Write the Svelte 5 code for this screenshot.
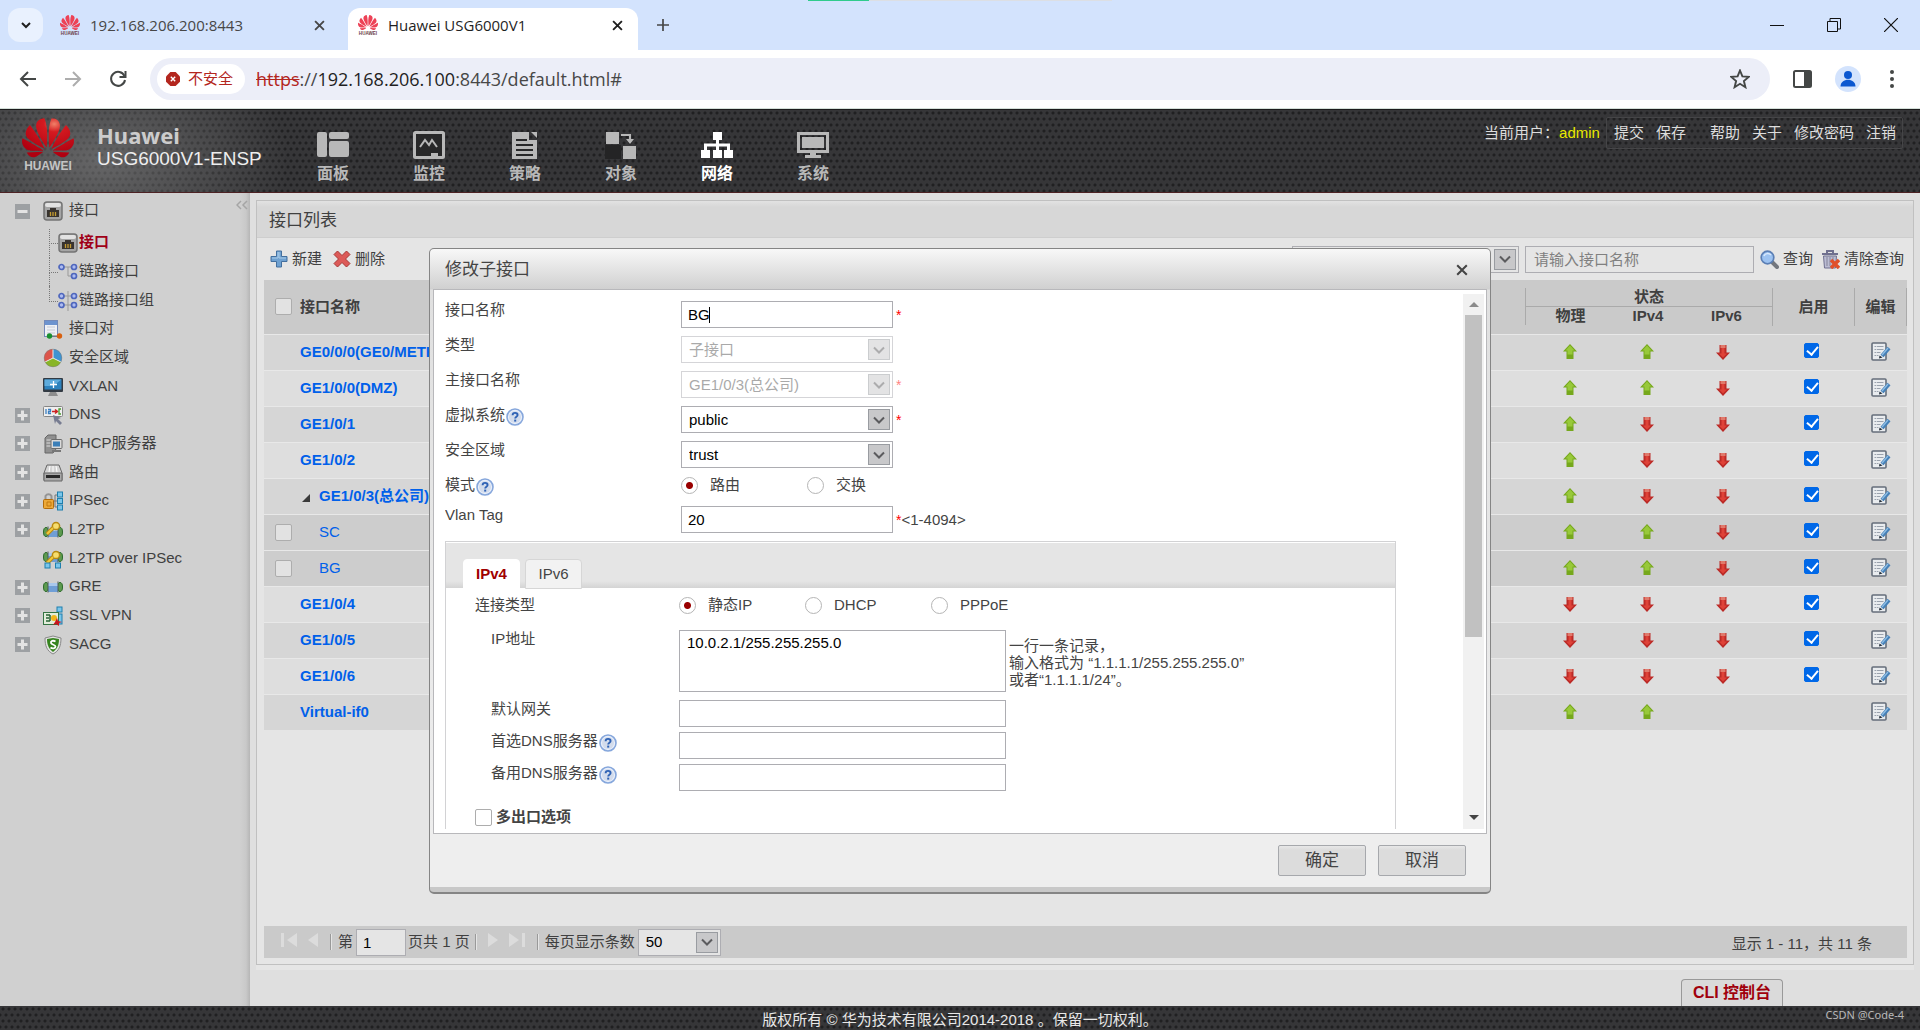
<script>
    let mode = 'route'
    let linkType = 'static'
    let ifName = 'BG'
    let vlanTag = '20'
    let ipList = '10.0.2.1/255.255.255.0'
    let page = '1'

    const nav = [
        { icon: 'panel', text: '面板' },
        { icon: 'monitor', text: '监控' },
        { icon: 'policy', text: '策略' },
        { icon: 'object', text: '对象' },
        { icon: 'network', text: '网络', active: true },
        { icon: 'system', text: '系统' }
    ]

    const tree = [
        { icon: 'port', text: '接口', toggle: 'minus' },
        { icon: 'port', text: '接口', child: true, active: true },
        { icon: 'link', text: '链路接口', child: true },
        { icon: 'linkGroup', text: '链路接口组', child: true, last: true },
        { icon: 'pair', text: '接口对' },
        { icon: 'zone', text: '安全区域' },
        { icon: 'vxlan', text: 'VXLAN' },
        { icon: 'dns', text: 'DNS', toggle: 'plus' },
        { icon: 'dhcp', text: 'DHCP服务器', toggle: 'plus' },
        { icon: 'route', text: '路由', toggle: 'plus' },
        { icon: 'ipsec', text: 'IPSec', toggle: 'plus' },
        { icon: 'l2tp', text: 'L2TP', toggle: 'plus' },
        { icon: 'l2tpIpsec', text: 'L2TP over IPSec' },
        { icon: 'gre', text: 'GRE', toggle: 'plus' },
        { icon: 'ssl', text: 'SSL VPN', toggle: 'plus' },
        { icon: 'sacg', text: 'SACG', toggle: 'plus' }
    ]

    // status: physical, IPv4, IPv6
    const rows = [
        { name: 'GE0/0/0(GE0/METH)', status: ['up', 'up', 'down'], enabled: true },
        { name: 'GE1/0/0(DMZ)', status: ['up', 'up', 'down'], enabled: true },
        { name: 'GE1/0/1', status: ['up', 'down', 'down'], enabled: true },
        { name: 'GE1/0/2', status: ['up', 'down', 'down'], enabled: true },
        { name: 'GE1/0/3(总公司)', status: ['up', 'down', 'down'], enabled: true, open: true },
        { name: 'SC', status: ['up', 'up', 'down'], enabled: true, sub: true },
        { name: 'BG', status: ['up', 'up', 'down'], enabled: true, sub: true },
        { name: 'GE1/0/4', status: ['down', 'down', 'down'], enabled: true },
        { name: 'GE1/0/5', status: ['down', 'down', 'down'], enabled: true },
        { name: 'GE1/0/6', status: ['down', 'down', 'down'], enabled: true },
        { name: 'Virtual-if0', status: ['up', 'up', ''] }
    ]
</script>

{#snippet logo(size, color, textColor)}
    <svg width={size} viewBox="0 0 24 25" aria-hidden="true">
        <defs><radialGradient id="petal" cx=".62" cy=".15" r=".8"><stop offset="0" stop-color="#f08068" /><stop offset=".25" stop-color="#d41a20" /><stop offset="1" stop-color="#b00010" /></radialGradient></defs>
        <path transform="translate(0 -2.9)" fill={color} d="M3.67 6.14S1.82 7.91 1.72 9.78v.35c.08 1.51 1.22 2.4 1.22 2.4 1.83 1.79 6.26 4.04 7.3 4.55 0 0 .06.03.1-.01l.02-.04v-.04C7.52 10.8 3.67 6.14 3.67 6.14zM9.65 18.6c-.02-.08-.1-.08-.1-.08l-7.38.26c.8 1.43 2.15 2.53 3.56 2.2.96-.25 3.16-1.78 3.88-2.3.06-.05.04-.09.04-.09zm.08-.78C6.49 15.63.21 12.28.21 12.28c-.15.46-.2.9-.21 1.3v.07c0 1.07.4 1.82.4 1.82.8 1.69 2.34 2.2 2.34 2.2.7.3 1.4.31 1.4.31.12.02 4.4 0 5.54 0 .05 0 .08-.05.08-.05v-.06c0-.03-.03-.05-.03-.05zM9.06 3.19a3.42 3.42 0 00-2.57 3.15v.41c.03.6.16 1.05.16 1.05.66 2.9 3.86 7.65 4.55 8.65.05.05.1.03.1.03a.1.1 0 00.06-.1c1.06-10.6-1.11-13.42-1.11-13.42-.32.02-1.19.23-1.19.23zm8.299 2.27s-.49-1.8-2.44-2.28c0 0-.57-.14-1.17-.22 0 0-2.18 2.81-1.12 13.43.01.07.06.08.06.08.07.03.1-.03.1-.03.72-1.03 3.9-5.76 4.55-8.64 0 0 .36-1.4.02-2.34zm-2.92 13.07s-.07 0-.09.05c0 0-.01.07.03.1.7.51 2.85 2 3.88 2.3 0 0 .16.05.43.06h.14c.69-.02 1.9-.37 3-2.26l-7.4-.25zm7.83-8.41c.14-2.06-1.94-3.97-1.94-3.98 0 0-3.85 4.66-6.67 10.8 0 0-.03.08.02.13l.04.01h.06c1.06-.53 5.46-2.77 7.28-4.54 0 0 1.15-.93 1.21-2.42zm1.52 2.14s-6.28 3.37-9.52 5.55c0 0-.05.04-.03.11 0 0 .03.06.07.06 1.16 0 5.56 0 5.67-.02 0 0 .57-.02 1.27-.29 0 0 1.56-.5 2.37-2.27 0 0 .73-1.45.17-3.14z" />
        <text x="12" y="23.800" text-anchor="middle" font-size="5.500" font-weight="bold" font-family="Liberation Sans, sans-serif" fill={textColor}>HUAWEI</text>
    </svg>
{/snippet}

{#snippet close(size)}
    <svg width={size} height={size} viewBox="0 0 10 10" aria-hidden="true"><path d="M1 1l8 8M9 1l-8 8" stroke="currentColor" stroke-width="1.7" /></svg>
{/snippet}

{#snippet help()}
    <svg class="help" width="18" height="18" viewBox="0 0 18 18" aria-hidden="true">
        <circle cx="9" cy="9" r="8" fill="#e9effa" stroke="#86a7dc" stroke-width="1.6" />
        <circle cx="9" cy="9" r="6" fill="#d3dcec" />
        <path d="M6.6 7.2c0-3.1 5-3.1 5-.2 0 1.7-2.4 1.7-2.4 3.4" fill="none" stroke="#2e62b5" stroke-width="1.9" />
        <rect x="8.2" y="11.6" width="2" height="2" fill="#2e62b5" />
    </svg>
{/snippet}

{#snippet arrow(dir)}
    <svg width="14" height="16" viewBox="0 0 14 16" role="img" aria-label={dir}>
        {#if dir == 'up'}
            <path d="M7 0l7 7.5h-3.5V15h-7V7.500H0z" fill="#76a81c" />
            <path d="M7 1.500l4.500 5H9.500v4h-5v-4h-2z" fill="#98c93a" />
        {:else}
            <path d="M3.500 1h7v7.500H14L7 16 0 8.500h3.500z" fill="#bb2a26" />
            <path d="M4.500 1h5v3h-5z" fill="#e07a6c" />
            <path d="M5.500 4h3v5.500h2.500L7 13.500 3 9.500h2.500z" fill="#df4238" />
        {/if}
    </svg>
{/snippet}

{#snippet chevron()}
    <span class="drop"><svg width="12" height="8" viewBox="0 0 12 8" aria-hidden="true"><path d="M1 1.500l5 5 5-5" fill="none" stroke="#5b5b5e" stroke-width="2" /></svg></span>
{/snippet}

{#snippet navIcon(name)}
    <svg width="32" height="28" viewBox="0 0 32 28" fill="currentColor" aria-hidden="true">
        {#if name == 'panel'}
            <rect x="0" y="1" width="10" height="25" rx="2" /><rect x="12" y="1" width="20" height="7" rx="2" /><rect x="12" y="10" width="20" height="16" rx="2" />
        {:else if name == 'monitor'}
            <rect x="1.500" y="1.500" width="29" height="25" rx="1" fill="#282829" stroke="currentColor" stroke-width="3" />
            <path d="M7 16l5-7 4 5 3-5 5 7" fill="none" stroke="currentColor" stroke-width="2" /><path d="M18 22h7v3h-7z" />
        {:else if name == 'policy'}
            <path d="M3 1h17v8h8v19H3z" /><path d="M22 1h6v6z" />
            <path d="M7 9h11M7 14h17M7 19h17M7 24h17" stroke="#282829" stroke-width="2" />
        {:else if name == 'object'}
            <rect x="0" y="14" width="16" height="14" fill="#242425" />
            <rect x="1" y="1" width="13" height="12" /><rect x="18" y="15" width="13" height="13" />
            <path d="M16 3h10v5h3l-4 5-4-5h3V5h-8z" />
        {:else if name == 'network'}
            <path d="M12 1h9v8h-9zM0 19h9v8H0zM12 19h9v8h-9zM23 19h9v8h-9z" />
            <path d="M16.500 8v11M4.500 20v-6h23v6" fill="none" stroke="currentColor" stroke-width="3" />
        {:else}
            <rect x="1.500" y="2.500" width="29" height="18" fill="none" stroke="currentColor" stroke-width="3" />
            <path d="M5 6h22v11H5zM13 21h6v3h-6zM8 24h16v3H8z" />
        {/if}
    </svg>
{/snippet}

{#snippet key()}
    <circle cx="13" cy="6" r="3.600" fill="#f6dd6d" stroke="#b88a12" stroke-width="1.500" />
    <path d="M10 8l-6 6" stroke="#b88a12" stroke-width="4" /><path d="M10 8l-6 6" stroke="#f1c83c" stroke-width="2" />
{/snippet}

{#snippet pipe()}
    <ellipse cx="3" cy="10" rx="2.500" ry="4.500" fill="#5d9b50" stroke="#2c6a2a" /><ellipse cx="17" cy="10" rx="2.500" ry="4.500" fill="#5d9b50" stroke="#2c6a2a" />
    <rect x="5" y="6" width="10" height="9" fill="#6f9ed6" /><rect x="5" y="6" width="10" height="3" fill="#a9c8ec" />
    <path d="M5 4.500v11M15 4.500v11" stroke="#4f5d55" />
{/snippet}

{#snippet treeIcon(name)}
    <svg width="20" height="20" viewBox="0 0 20 20" aria-hidden="true">
        {#if name == 'port'}
            <rect x="1" y="1" width="18" height="18" rx="3" fill="#a5a5a5" stroke="#747474" stroke-width="1.500" /><rect x="2" y="2" width="16" height="4" rx="2" fill="#e2e2e2" />
            <path d="M4 16V9h3V7h6v2h3v7z" fill="#38332f" /><path d="M7.500 11v4M10 11v4M12.500 11v4" stroke="#c49b32" stroke-width="1.300" />
        {:else if name == 'link'}
            <path d="M4 5h12M10 5v9h6" fill="none" stroke="#999" />
            <g fill="#aebcf1" stroke="#4f67bd" stroke-width="1.700"><circle cx="3.500" cy="5" r="2.500" /><circle cx="16" cy="5" r="2.500" /><circle cx="16" cy="14" r="2.500" /></g>
        {:else if name == 'linkGroup'}
            <path d="M10 0v20M4 5h12M4 14h12" stroke="#999" />
            <g fill="#aebcf1" stroke="#4f67bd" stroke-width="1.700"><circle cx="3.500" cy="5" r="2.500" /><circle cx="16" cy="5" r="2.500" /><circle cx="3.500" cy="14" r="2.500" /><circle cx="16" cy="14" r="2.500" /></g>
        {:else if name == 'pair'}
            <rect x="1.500" y="1.500" width="13" height="16" fill="#eef0f5" stroke="#7389b8" /><path d="M2 2h12v4H2z" fill="#6c93cf" /><path d="M4 8h8M4 11h8M4 14h8" stroke="#c5cad4" />
            <path d="M6 17h11" stroke="#666" /><circle cx="6.500" cy="17" r="2.700" fill="#18902e" /><circle cx="16.500" cy="17" r="2.700" fill="#d8600f" />
        {:else if name == 'zone'}
            <path d="M10 10V1a9 9 0 0 0-8 13z" fill="#dc544a" /><path d="M10 10V1a9 9 0 0 1 8 13z" fill="#3e93d1" /><path d="M10 10l8 4a9 9 0 0 1-16 0z" fill="#88b526" />
            <path d="M10 1v9M10 10l8 4M10 10l-8 4" stroke="#e8e8e8" /><circle cx="10" cy="10" r="8.800" fill="none" stroke="#777" stroke-opacity=".5" />
        {:else if name == 'vxlan'}
            <rect x="0" y="1" width="20" height="14" rx="1" fill="#333b44" /><rect x="1.500" y="2.500" width="17" height="10" fill="#2d82bd" /><path d="M1.500 2.500h17L10 9H1.500z" fill="#5eabdc" />
            <path d="M10.500 4v7M7 7.500h7" stroke="#fff" stroke-width="1.300" /><path d="M7 15h6l2 4H5z" fill="#8d8d8d" />
        {:else if name == 'dns'}
            <rect x=".5" y="1.500" width="19" height="10" rx="1" fill="#efefef" stroke="#858585" /><path d="M3 4v5M5 4.500h2.500v2H5.500v2H8" fill="none" stroke="#3c7fc0" stroke-width="1.300" />
            <path d="M9 6.500h5M12 4.500l2.500 2-2.500 2" fill="none" stroke="#c22" stroke-width="1.500" /><path d="M18 4h-2v5h2" fill="none" stroke="#4a9c2d" stroke-width="1.300" /><path d="M10 10l8 3-3 1 4 4-2 2-4-4-1 3z" fill="#777c91" />
        {:else if name == 'dhcp'}
            <path d="M2 4l3-3h8v14l-3 4H2z" fill="#909090" stroke="#666" /><path d="M3.500 6h5M3.500 9h5M3.500 12h5" stroke="#ddd" />
            <rect x="8" y="5.500" width="11" height="9" rx="1" fill="#dadada" stroke="#6c6c6c" /><rect x="10" y="7.500" width="7" height="5" fill="#3c7fb8" /><path d="M9 17h9" stroke="#777" stroke-width="2" />
        {:else if name == 'route'}
            <path d="M4 2h12l3 8v7H1v-7z" fill="#d4d4d4" stroke="#666" /><path d="M1 10h18v8H1z" fill="#a9a9a9" stroke="#666" /><path d="M7 3L6 9M10 3v6M13 3l1 6" stroke="#fff" /><path d="M3 12h14v3H3z" fill="#292929" />
        {:else if name == 'ipsec'}
            <path d="M2.500 9V5a3.500 3.500 0 0 1 6 0v4" fill="none" stroke="#949494" stroke-width="2" /><rect x=".5" y="8.500" width="10" height="9" rx="1" fill="#eca939" stroke="#b26c0b" /><path d="M4 11h4v4H4z" fill="none" stroke="#c1790f" />
            <path d="M11 10h4M15 4h-3v12h3" fill="none" stroke="#777" /><g fill="#7bc6ea" stroke="#1e7fae"><rect x="14.500" y="1" width="5" height="5" /><rect x="14.500" y="7.500" width="5" height="5" /><rect x="14.500" y="14" width="5" height="5" /></g>
        {:else if name == 'l2tp'}
            <g transform="translate(0 2)">{@render pipe()}</g>{@render key()}
        {:else if name == 'l2tpIpsec'}
            <g transform="translate(0 -2)">{@render pipe()}</g>{@render key()}
            <g fill="#7bc6ea" stroke="#1e7fae"><rect x="2" y="14" width="5" height="5" /><rect x="12.500" y="14" width="5" height="5" /></g>
        {:else if name == 'gre'}
            {@render pipe()}
        {:else if name == 'ssl'}
            <g fill="#7bc6ea" stroke="#1e7fae"><rect x="14" y="1" width="5" height="5" /><rect x="14" y="8" width="5" height="10" /></g>
            <rect x=".5" y="6.500" width="15" height="12" fill="#e2edda" stroke="#347443" /><path d="M3 9h4M3 12h3M3 15h4M7 9v6" stroke="#286336" stroke-width="1.500" /><circle cx="11" cy="12" r="3" fill="#f0b41b" /><path d="M14 12l1 3 4 1-3 1v3l-3-2-3 1 2-3z" fill="#c9151d" />
        {:else}
            <path d="M10 1l8 2c0 8-2 13-8 16C4 16 2 11 2 3z" fill="#e4e4e4" stroke="#888" /><path d="M10 3l6 1c0 6-2 10-6 13-4-3-6-7-6-13z" fill="#36841f" />
            <path d="M12.500 6.500C10 5 7.500 6 8 8s4.500 1.500 4.500 3.500-3 2.500-5 1" fill="none" stroke="#fff" stroke-width="1.800" />
        {/if}
    </svg>
{/snippet}

<div class="window">
    <div class="tabstrip">
        <i class="loading"></i>
        <button class="tab-search" aria-label="搜索标签页"><svg width="12" height="12" viewBox="0 0 12 12"><path d="M2 4l4 4 4-4" fill="none" stroke="#1f1f1f" stroke-width="2" /></svg></button>
        <div class="tab">
            {@render logo(20, '#ed4256', '#6e4148')}
            <span>192.168.206.200:8443</span>
            <button class="plain" aria-label="关闭">{@render close(11)}</button>
        </div>
        <div class="tab current">
            {@render logo(20, '#ed4256', '#6e4148')}
            <span>Huawei USG6000V1</span>
            <button class="plain" aria-label="关闭">{@render close(11)}</button>
        </div>
        <button class="plain new-tab" aria-label="新标签页"><svg width="14" height="14" viewBox="0 0 14 14"><path d="M7 1v12M1 7h12" stroke="currentColor" stroke-width="1.700" /></svg></button>
        <div class="controls">
            <button class="plain" aria-label="最小化"><svg width="14" height="14"><path d="M0 7.500h14" stroke="#111" /></svg></button>
            <button class="plain" aria-label="还原"><svg width="14" height="14"><path d="M.5 3.500h10v10H.500zM3 3V.500h10.500V11H11" fill="none" stroke="#111" /></svg></button>
            <button class="plain" aria-label="关闭窗口"><svg width="14" height="14"><path d="M0 0l14 14M14 0L0 14" stroke="#111" stroke-width="1.200" /></svg></button>
        </div>
    </div>

    <div class="addressbar">
        <button class="plain" aria-label="后退"><svg width="18" height="16" viewBox="0 0 18 16"><path d="M17 8H2M9 1L2 8l7 7" fill="none" stroke="#444746" stroke-width="2" /></svg></button>
        <button class="plain" aria-label="前进"><svg width="18" height="16" viewBox="0 0 18 16"><path d="M1 8h15M9 1l7 7-7 7" fill="none" stroke="#adadad" stroke-width="2" /></svg></button>
        <button class="plain" aria-label="刷新"><svg width="18" height="18" viewBox="0 0 18 18"><path d="M15.500 6A7 7 0 1 0 16 10" fill="none" stroke="#444746" stroke-width="2" /><path d="M16.500 1v6h-6" fill="none" stroke="#444746" stroke-width="2" /></svg></button>
        <div class="omnibox">
            <span class="unsafe"><svg width="14" height="14" viewBox="0 0 16 16"><path d="M5 0h6l5 5v6l-5 5H5l-5-5V5z" fill="#b3261e" /><path d="M5.500 5.500l5 5M10.500 5.500l-5 5" stroke="#fff" stroke-width="1.600" /></svg>不安全</span>
            <span class="url"><s>https</s>://<b>192.168.206.100</b>:8443/default.html#</span>
            <svg width="20" height="20" viewBox="0 0 20 20"><path d="M10 1.500l2.400 5.900 6.300.5-4.800 4.100 1.500 6.200L10 14.800l-5.400 3.400 1.500-6.200-4.800-4.100 6.300-.5z" fill="none" stroke="#444746" stroke-width="1.900" /></svg>
        </div>
        <div class="browser-icons">
            <svg width="19" height="18" viewBox="0 0 19 18"><rect x="1" y="1" width="17" height="16" rx="1.500" fill="none" stroke="#444746" stroke-width="2" /><path d="M11 1h7v16h-7z" fill="#444746" /></svg>
            <svg width="26" height="26" viewBox="0 0 26 26"><circle cx="13" cy="13" r="13" fill="#d3e3fd" /><circle cx="13" cy="9" r="4" fill="#0b57d0" /><path d="M5.500 20.500c0-9 15-9 15 0z" fill="#0b57d0" /></svg>
            <svg class="more" width="6" height="20" viewBox="0 0 6 20" fill="#444746"><circle cx="3" cy="3" r="2" /><circle cx="3" cy="10" r="2" /><circle cx="3" cy="17" r="2" /></svg>
        </div>
    </div>

    <header class="mesh">
        <div class="brand">
            {@render logo(52, 'url(#petal)', '#c4c4c4')}
            <div class="model"><strong>Huawei</strong><span>USG6000V1-ENSP</span></div>
        </div>
        <nav>
            {#each nav as item}
                <a href="#{item.icon}" class:active={item.active}>{@render navIcon(item.icon)}{item.text}</a>
            {/each}
        </nav>
        <div class="user">
            <span>当前用户：<em>admin</em></span>
            <div class="links">
                <a href="#commit">提交</a><a href="#save">保存</a><a class="split" href="#help">帮助</a><a href="#about">关于</a><a href="#password">修改密码</a><a href="#logout">注销</a>
            </div>
        </div>
    </header>

    <div class="content">
        <aside>
            <ul>
                {#each tree as item}
                    <li class:child={item.child} class:last={item.last} class:active={item.active}>
                        <span class="toggle" class:box={item.toggle}>
                            {#if item.toggle}
                                <svg width="15" height="15" viewBox="0 0 15 15"><path d={item.toggle == 'plus' ? 'M2.5 7.500h10M7.500 2.500v10' : 'M2.500 7.500h10'} stroke="#e3e3e3" stroke-width="3" /></svg>
                            {/if}
                        </span>
                        {@render treeIcon(item.icon)}
                        <a href="#{item.icon}">{item.text}</a>
                    </li>
                {/each}
            </ul>
            <button class="plain collapse" aria-label="收起"><svg width="12" height="10" viewBox="0 0 12 10"><path d="M5 1L1 5l4 4M11 1L7 5l4 4" fill="none" stroke="#a5a5a5" stroke-width="1.500" /></svg></button>
        </aside>

        <main>
            <section class="panel">
                <h1>接口列表</h1>
                <div class="toolbar">
                    <button class="plain tool"><svg width="18" height="18" viewBox="0 0 18 18"><path d="M6.500 1h5v5.500H17v5h-5.500V17h-5v-5.500H1v-5h5.500z" fill="#6fa1d1" stroke="#436f9e" /><path d="M8 2v6H2M9 2v6h7" fill="none" stroke="#a9cbe8" /></svg>新建</button>
                    <button class="plain tool"><svg width="18" height="18" viewBox="0 0 18 18"><path d="M4.500 1L9 5.500 13.500 1 17 4.500 12.500 9l4.500 4.500-3.500 3.500L9 12.500 4.500 17 1 13.500 5.500 9 1 4.500z" fill="#dc5a58" stroke="#a83634" /></svg>删除</button>
                    <div class="search">
                        <label class="combo field"><select aria-label="虚拟系统筛选"><option></option></select>{@render chevron()}</label>
                        <input class="box-input" placeholder="请输入接口名称" aria-label="接口名称查询">
                        <button class="plain tool"><svg width="19" height="19" viewBox="0 0 19 19"><path d="M12 12l5 5" stroke="#73777e" stroke-width="4" stroke-linecap="round" /><circle cx="7.500" cy="7.500" r="6.300" fill="#9cc2f1" stroke="#5b7fb5" stroke-width="1.700" /><path d="M4 6c1-3 5-3 7-1" fill="none" stroke="#d9e9fc" stroke-width="1.500" /></svg>查询</button>
                        <button class="plain tool"><svg width="19" height="19" viewBox="0 0 19 19"><path d="M6 3V1h6v2M1 4h16" fill="none" stroke="#70708f" stroke-width="2" /><path d="M2.500 6h13l-1 12h-11z" fill="#bbbcd3" stroke="#70708f" /><path d="M6 7v9M9 7v9M12 7v9" stroke="#858599" /><path d="M10 10l8 8M18 10l-8 8" stroke="#e0502b" stroke-width="3.500" /></svg>清除查询</button>
                    </div>
                </div>

                <table>
                    <colgroup><col class="c-check"><col class="c-name"><col><col class="c-phy"><col class="c-v4"><col class="c-v6"><col class="c-enable"><col class="c-edit"></colgroup>
                    <thead>
                        <tr>
                            <th rowspan="2"><input type="checkbox" aria-label="全选"></th>
                            <th rowspan="2" class="name">接口名称</th>
                            <th rowspan="2"></th>
                            <th colspan="3"><div class="group">状态</div></th>
                            <th rowspan="2"><div class="rule">启用</div></th>
                            <th rowspan="2"><div class="rule end">编辑</div></th>
                        </tr>
                        <tr class="subhead">
                            <th><div class="rule-left">物理</div></th><th>IPv4</th><th>IPv6</th>
                        </tr>
                    </thead>
                    <tbody>
                        {#each rows as row}
                            <tr class:sub={row.sub}>
                                <td>{#if row.sub}<input type="checkbox" aria-label={row.name}>{/if}</td>
                                <td class="name" class:indent={row.open || row.sub}>
                                    {#if row.open}<svg class="caret-open" width="8" height="8" viewBox="0 0 8 8"><path d="M8 0v8H0z" fill="#3a3a3a" /></svg>{/if}
                                    <a href="#edit">{row.name}</a>
                                </td>
                                <td></td>
                                {#each row.status as state}
                                    <td class="state">{#if state}{@render arrow(state)}{/if}</td>
                                {/each}
                                <td class="state enable">{#if row.enabled}<input type="checkbox" checked aria-label="启用 {row.name}">{/if}</td>
                                <td class="state edit">
                                    <button class="plain" aria-label="编辑 {row.name}"><svg width="20" height="19" viewBox="0 0 20 19"><rect x="1" y="1" width="14" height="17" rx="1" fill="#e9ecef" stroke="#656e7b" stroke-width="1.600" /><path d="M3.500 4.500h9M3.500 7.500h9M3.500 10.500h6M3.500 13.500h4" stroke="#9aa2ad" stroke-dasharray="1.500 .7 8" /><path d="M18 6l-7 8" stroke="#4681b8" stroke-width="4" /><path d="M17 6l-6 7" stroke="#8fbde3" stroke-width="1.300" /><path d="M11.500 15.500l-3-2L8 16.500z" fill="#25303b" /></svg></button>
                                </td>
                            </tr>
                        {/each}
                    </tbody>
                </table>

                <div class="pager">
                    <button class="plain" aria-label="首页"><svg width="16" height="14" viewBox="0 0 16 14" fill="#dcdcdc"><path d="M0 0h3v14H0zM16 0v14L6 7z" /></svg></button>
                    <button class="plain" aria-label="上一页"><svg width="10" height="14" viewBox="0 0 10 14" fill="#dcdcdc"><path d="M10 0v14L0 7z" /></svg></button>
                    <i class="sep"></i>
                    <label for="page">第</label>
                    <input id="page" class="box-input" bind:value={page}>
                    <span>页共 1 页</span>
                    <i class="sep"></i>
                    <button class="plain" aria-label="下一页"><svg width="10" height="14" viewBox="0 0 10 14" fill="#dcdcdc"><path d="M0 0v14l10-7z" /></svg></button>
                    <button class="plain" aria-label="末页"><svg width="16" height="14" viewBox="0 0 16 14" fill="#dcdcdc"><path d="M13 0h3v14h-3zM0 0v14l10-7z" /></svg></button>
                    <i class="sep"></i>
                    <label for="size">每页显示条数</label>
                    <div class="combo size"><select id="size"><option>50</option></select>{@render chevron()}</div>
                    <span class="total">显示 1 - 11，共 11 条</span>
                </div>
            </section>
            <button class="cli">CLI 控制台</button>
        </main>
    </div>

    <footer class="mesh">
        <span>版权所有 © 华为技术有限公司2014-2018 。保留一切权利。</span>
        <small>CSDN @Code-4</small>
    </footer>

    <div class="dialog" role="dialog" aria-labelledby="dialog-title">
        <div class="dialog-head">
            <h2 id="dialog-title">修改子接口</h2>
            <button class="plain" aria-label="关闭">{@render close(12)}</button>
        </div>
        <div class="dialog-body">
            <form>
                <div class="rows">
                    <div class="row">
                        <label for="name">接口名称</label>
                        <div class="typing"><input id="name" class="box-input" bind:value={ifName}><i></i></div><em>*</em>
                    </div>
                    <div class="row off">
                        <label for="type">类型</label>
                        <div class="combo"><select id="type" disabled><option>子接口</option></select>{@render chevron()}</div>
                    </div>
                    <div class="row off">
                        <label for="parent">主接口名称</label>
                        <div class="combo"><select id="parent" disabled><option>GE1/0/3(总公司)</option></select>{@render chevron()}</div><em>*</em>
                    </div>
                    <div class="row">
                        <label for="vsys">虚拟系统{@render help()}</label>
                        <div class="combo"><select id="vsys"><option>public</option></select>{@render chevron()}</div><em>*</em>
                    </div>
                    <div class="row">
                        <label for="zone">安全区域</label>
                        <div class="combo"><select id="zone"><option>trust</option></select>{@render chevron()}</div>
                    </div>
                    <div class="row radios">
                        <span class="caption">模式{@render help()}</span>
                        <label><input type="radio" bind:group={mode} value="route">路由</label>
                        <label><input type="radio" bind:group={mode} value="switch">交换</label>
                    </div>
                    <div class="row">
                        <label for="vlan">Vlan Tag</label>
                        <input id="vlan" class="box-input" bind:value={vlanTag}><em>*</em><span>&lt;1-4094&gt;</span>
                    </div>
                </div>

                <div class="ip-panel">
                    <div class="ip-tabs">
                        <button type="button" class="on">IPv4</button>
                        <button type="button">IPv6</button>
                    </div>
                    <div class="ip-rows">
                        <div class="row radios">
                            <span class="caption">连接类型</span>
                            <label><input type="radio" bind:group={linkType} value="static">静态IP</label>
                            <label><input type="radio" bind:group={linkType} value="dhcp">DHCP</label>
                            <label><input type="radio" bind:group={linkType} value="pppoe">PPPoE</label>
                        </div>
                        <div class="row nested area">
                            <label for="ip">IP地址</label>
                            <textarea id="ip" class="box-input" bind:value={ipList}></textarea>
                            <p>一行一条记录，<br>输入格式为 “1.1.1.1/255.255.255.0”<br>或者“1.1.1.1/24”。</p>
                        </div>
                        <div class="row nested"><label for="gateway">默认网关</label><input id="gateway" class="box-input"></div>
                        <div class="row nested"><label for="dns1">首选DNS服务器{@render help()}</label><input id="dns1" class="box-input"></div>
                        <div class="row nested"><label for="dns2">备用DNS服务器{@render help()}</label><input id="dns2" class="box-input"></div>
                        <label class="multi"><input type="checkbox">多出口选项</label>
                    </div>
                </div>
            </form>
            <div class="scrollbar">
                <svg width="12" height="7" viewBox="0 0 12 7"><path d="M1 6l5-5 5 5z" fill="#8b8b8b" /></svg>
                <i></i>
                <svg width="12" height="7" viewBox="0 0 12 7"><path d="M1 1l5 5 5-5z" fill="#444" /></svg>
            </div>
        </div>
        <div class="dialog-foot">
            <button>确定</button>
            <button>取消</button>
        </div>
    </div>
</div>

<style>
    :global(body) {
        margin: 0;
    }
    .window, .window * {
        box-sizing: border-box;
    }
    .window {
        position: relative;
        display: flex;
        flex-direction: column;
        min-height: 100vh;
        font: 15px/20px "Liberation Sans", "Noto Sans CJK SC", sans-serif;
        color: #404040;
        background: #dfdfdf;
    }
    button, input, select, textarea {
        font: inherit;
        color: inherit;
    }
    a {
        color: inherit;
        text-decoration: none;
    }
    svg {
        display: block;
        flex: none;
    }
    .plain {
        display: flex;
        align-items: center;
        padding: 0;
        border: 0;
        background: none;
    }

    /* browser */
    .tabstrip {
        position: relative;
        display: flex;
        height: 50px;
        padding: 8px 22px 0 8px;
        background: #d3e3fd;
        font: 15px/20px "Open Sans", "Noto Sans", sans-serif;
        color: #474747;
    }
    .loading {
        position: absolute;
        top: 0;
        left: 808px;
        width: 304px;
        height: 1px;
        background: linear-gradient(to right, #2fcb8c 20%, #dcdfe4 20%);
    }
    .tab-search {
        display: flex;
        align-items: center;
        justify-content: center;
        width: 35px;
        height: 34px;
        border: 0;
        border-radius: 12px;
        background: #e9f1fe;
    }
    .tab {
        display: flex;
        align-items: center;
        width: 290px;
        height: 42px;
        padding: 0 15px 8px 10px;
        margin-left: 7px;
    }
    .tab span {
        flex: 1;
        margin-left: 10px;
    }
    .tab.current {
        margin-left: 8px;
        border-radius: 12px 12px 0 0;
        background: #fff;
        color: #1f1f1f;
    }
    .new-tab {
        height: 34px;
        margin-left: 18px;
    }
    .controls {
        display: flex;
        gap: 43px;
        height: 34px;
        margin-left: auto;
    }
    .addressbar {
        display: flex;
        align-items: center;
        height: 59px;
        padding: 0 25px 1px 19px;
        gap: 27px;
        background: #fff;
        border-bottom: 1px solid #d4dfd9;
    }
    .omnibox {
        display: flex;
        flex: 1;
        align-items: center;
        height: 42px;
        padding: 0 20px 0 7px;
        margin-left: -4px;
        border-radius: 21px;
        background: #eceef8;
    }
    .unsafe {
        display: flex;
        align-items: center;
        gap: 8px;
        height: 30px;
        padding: 0 12px 0 9px;
        border-radius: 15px;
        background: #fff;
        color: #b3261e;
    }
    .url {
        flex: 1;
        margin-left: 11px;
        font: 18px/24px "Open Sans", "Noto Sans", sans-serif;
        color: #474747;
    }
    .url s {
        color: #b3261e;
    }
    .url b {
        font-weight: 400;
        color: #1f1f1f;
    }
    .browser-icons {
        display: flex;
        align-items: center;
        gap: 23px;
        margin-left: -4px;
    }
    .more {
        margin-left: 5px;
    }

    /* device header */
    .mesh {
        background:
            radial-gradient(circle at 3px 3px, #202021 1px, transparent 2px) 0 0 / 6px 12px,
            radial-gradient(circle at 3px 3px, #202021 1px, transparent 2px) 3px 6px / 6px 12px,
            #363638;
    }
    header {
        display: flex;
        height: 84px;
        padding: 0 17px 0 0;
        border-top: 1px solid #1c1c1c;
        border-bottom: 1px solid #4d2224;
        color: #ddd;
    }
    .brand {
        display: flex;
        align-items: flex-start;
        width: 285px;
        padding: 8px 0 0 22px;
        gap: 23px;
        background: radial-gradient(ellipse 190px 120px at 100px 50px, rgba(150, 150, 150, .5), transparent);
    }
    .model {
        display: flex;
        flex-direction: column;
        padding-top: 5px;
        font-size: 19px;
        line-height: 24px;
        color: #eee;
    }
    .model strong {
        font: bold 22px/24px "Noto Sans", sans-serif;
        color: #ccc;
    }
    nav {
        display: flex;
    }
    nav a {
        display: flex;
        flex-direction: column;
        align-items: center;
        gap: 5px;
        width: 96px;
        padding-top: 21px;
        font-size: 16px;
        font-weight: bold;
        color: #b8b8b8;
    }
    nav a.active {
        color: #fff;
    }
    .user {
        display: flex;
        gap: 6px;
        height: 32px;
        margin: 7px 0 0 auto;
        line-height: 32px;
    }
    .user em {
        font-style: normal;
        color: #e8e800;
    }
    .links {
        display: flex;
        gap: 12px;
        padding: 0 6px 0 7px;
        border: 1px solid #454547;
        border-radius: 2px;
        line-height: 30px;
    }
    .links .split {
        margin-left: 12px;
    }

    /* tree */
    .content {
        display: flex;
        flex: 1;
    }
    aside {
        position: relative;
        width: 250px;
        background: linear-gradient(to right, #d0d0d0 240px, #c9c9c9 246px, #b6b6b6);
    }
    aside ul {
        display: grid;
        grid-template-rows: 36px repeat(15, 1fr);
        height: 466px;
        margin: 0;
        padding: 0 0 0 15px;
        list-style: none;
    }
    aside li {
        position: relative;
        display: flex;
        align-items: center;
    }
    .toggle {
        width: 15px;
        height: 15px;
        margin-right: 13px;
    }
    .toggle.box {
        background: #9da0a3;
    }
    aside li a {
        margin: 0 0 2px 6px;
    }
    .child .toggle {
        margin-right: 28px;
    }
    .child a {
        margin-left: 1px;
    }
    .child::before {
        content: "";
        position: absolute;
        left: 34px;
        top: 0;
        width: 8px;
        height: 50%;
        border-left: 1px dotted #777;
        border-bottom: 1px dotted #777;
    }
    .child:not(.last)::after {
        content: "";
        position: absolute;
        left: 34px;
        top: 50%;
        height: 50%;
        border-left: 1px dotted #777;
    }
    aside .active {
        font-weight: bold;
        color: #a00018;
    }
    .collapse {
        position: absolute;
        top: 7px;
        right: 2px;
    }

    /* list */
    main {
        display: flex;
        flex: 1;
        flex-direction: column;
        padding: 7px 6px 0 6px;
    }
    .panel {
        display: flex;
        flex: 1;
        flex-direction: column;
        padding: 0 6px 6px 7px;
        border: 1px solid #c0c0c0;
        box-shadow: 0 5px #e5e5e5;
        background: #e5e5e5;
    }
    h1, h2 {
        margin: 0;
        font-size: 17px;
        font-weight: 400;
    }
    h1 {
        margin: 0 -6px 0 -7px;
        padding: 4px 12px 0;
        border-bottom: 1px solid #cecece;
        background: linear-gradient(#e2e2e2, #d7d7d7 6px);
        line-height: 32px;
    }
    .toolbar {
        display: flex;
        align-items: center;
        gap: 11px;
        height: 42px;
        padding: 0 3px 0 6px;
    }
    .tool {
        gap: 4px;
    }
    .search {
        display: flex;
        align-items: center;
        gap: 6px;
        margin-left: auto;
    }
    .search .tool:last-child {
        margin-left: 2px;
    }
    .box-input, .combo {
        height: 27px;
        border: 1px solid #adadb2;
        background: none;
    }
    .box-input {
        padding: 0 6px;
        outline: 0;
        border-radius: 0;
    }
    .search .box-input {
        width: 229px;
        padding: 0 8px;
    }
    .search .combo {
        width: 227px;
    }
    ::placeholder {
        color: #808080;
    }
    .combo {
        position: relative;
    }
    .combo select {
        width: 100%;
        height: 25px;
        padding: 0 7px;
        border: 0;
        background: none;
        appearance: none;
        opacity: 1;
    }
    .drop {
        position: absolute;
        top: 2px;
        right: 2px;
        display: grid;
        place-items: center;
        width: 22px;
        height: 21px;
        border: 1px solid #999ca1;
        background: #c8c8ca;
        pointer-events: none;
    }
    table {
        width: 100%;
        table-layout: fixed;
        border-collapse: collapse;
    }
    .c-check { width: 36px; }
    .c-name { width: 200px; }
    .c-phy { width: 84px; }
    .c-v4 { width: 78px; }
    .c-v6 { width: 85px; }
    .c-enable { width: 82px; }
    .c-edit { width: 53px; }
    th, td {
        padding: 0;
    }
    thead {
        background: #cacaca;
    }
    thead tr {
        height: 27px;
    }
    thead th {
        line-height: 18px;
    }
    .name {
        text-align: left;
        white-space: nowrap;
    }
    .group {
        margin-top: 8px;
        border: solid #aaa;
        border-width: 0 0 1px 1px;
    }
    .subhead th {
        padding-bottom: 8px;
    }
    .rule-left {
        padding-left: 6px;
        border-left: 1px solid #aaa;
    }
    .subhead th:last-child {
        padding-right: 6px;
    }
    .rule {
        border-left: 1px solid #aaa;
        line-height: 38px;
    }
    .end {
        border-right: 1px solid #aaa;
    }
    tbody tr {
        height: 36px;
        border-top: 1px solid #e8e8e8;
        background: #dedede;
    }
    tbody tr:nth-child(odd) {
        background: #d6d6d6;
    }
    tbody tr.sub {
        background: #cdcdcd;
    }
    tbody .name {
        position: relative;
        font-weight: bold;
        color: #0060ea;
    }
    tbody .indent {
        padding-left: 19px;
    }
    tbody .sub .name {
        font-weight: 400;
    }
    .caret-open {
        position: absolute;
        top: 15px;
        left: 2px;
    }
    .state svg {
        margin: 0 auto;
    }
    .state .plain {
        margin: 0 auto;
    }
    .state:nth-child(4) {
        padding-left: 6px;
    }
    .state:nth-child(5) {
        padding-right: 2px;
    }
    .state:nth-child(6) {
        padding-right: 12px;
    }
    .enable {
        padding: 0 4px 4px 0;
    }
    .edit {
        padding-bottom: 2px;
    }
    input[type=checkbox] {
        display: block;
        width: 17px;
        height: 17px;
        margin: 0 0 0 11px;
        border: 1px solid #adadad;
        border-radius: 2px;
        appearance: none;
        background: #e2e2e2;
    }
    input[type=checkbox]:checked {
        position: relative;
        width: 15px;
        height: 15px;
        margin: 0 auto;
        border-color: #0068e8;
        background: #0068e8;
    }
    input[type=checkbox]:checked::after {
        content: "";
        position: absolute;
        top: 0;
        left: 4px;
        width: 5px;
        height: 9px;
        border: solid #fff;
        border-width: 0 2px 2px 0;
        transform: rotate(40deg);
    }
    .pager {
        display: flex;
        align-items: center;
        height: 32px;
        margin-top: auto;
        padding: 0 35px 0 17px;
        background: #cacaca;
    }
    .pager .plain {
        margin-bottom: 4px;
    }
    .pager .plain + .plain {
        margin-left: 11px;
    }
    .sep {
        width: 2px;
        height: 16px;
        margin: 0 6px 0 12px;
        border-left: 1px solid #999;
        border-right: 1px solid #e5e5e5;
    }
    .pager span + .sep {
        margin: 0 11px 0 5px;
    }
    .pager .box-input {
        width: 50px;
        margin: 0 2px 0 3px;
        background: #e5e5e5;
        color: #000;
    }
    .pager .combo {
        width: 83px;
        margin-left: 3px;
        background: #e5e5e5;
        color: #000;
    }
    .total {
        margin: 4px 0 0 auto;
    }
    .cli {
        align-self: flex-end;
        width: 102px;
        height: 27px;
        margin: 14px 131px 0 0;
        padding: 0;
        border: 1px solid #999;
        border-bottom: 0;
        border-radius: 4px 4px 0 0;
        background: #dadada;
        font-size: 16px;
        line-height: 24px;
        font-weight: bold;
        color: #a0000c;
    }
    footer {
        position: relative;
        height: 24px;
        text-align: center;
        line-height: 28px;
        color: #e8e8e8;
        overflow: hidden;
    }
    small {
        position: absolute;
        top: 0;
        right: 16px;
        font: 11px/18px "Noto Sans", sans-serif;
        color: #b8b8b8;
    }

    /* dialog */
    .dialog {
        position: absolute;
        top: 248px;
        left: 50%;
        width: 1062px;
        margin-left: -531px;
        padding: 0 3px;
        border: 1px solid #858585;
        border-radius: 5px;
        border-bottom-width: 2px;
        background: linear-gradient(#f8f8f8, #d0d0d0 40px, #e0e0e0 41px, #eee 580px, #eee 638px, #c8c8c8 638px);
        color: #444;
    }
    .dialog-head {
        display: flex;
        align-items: center;
        justify-content: space-between;
        height: 40px;
        padding: 1px 19px 0 12px;
    }
    .dialog-body {
        display: flex;
        justify-content: space-between;
        height: 545px;
        padding: 4px 2px 4px 11px;
        border: 1px solid #b8b8bb;
        background: #fff;
    }
    form {
        width: 951px;
        overflow: hidden;
    }
    .rows {
        display: grid;
        gap: 8px;
        padding: 7px 0 8px;
    }
    .row {
        display: flex;
        align-items: center;
    }
    .row > label:first-child, .caption {
        display: flex;
        align-self: flex-start;
        width: 236px;
        line-height: 18px;
    }
    .off .combo, .off em {
        opacity: .5;
    }
    .help {
        margin: 2px 0 0 1px;
    }
    .rows .box-input, .rows .combo {
        width: 212px;
        color: #000;
    }
    .rows .off .combo {
        color: #555;
    }
    .row em {
        margin-left: 3px;
        font-style: normal;
        color: #f00;
        font-size: 14px;
    }
    .typing {
        position: relative;
        display: flex;
    }
    .typing i {
        position: absolute;
        top: 6px;
        left: 28px;
        width: 1px;
        height: 16px;
        background: #000;
    }
    .radios {
        height: 22px;
    }
    .rows .radios {
        height: 18px;
        margin-bottom: 4px;
    }
    .radios label {
        display: flex;
        align-items: center;
        width: 126px;
        line-height: 20px;
    }
    input[type=radio] {
        width: 17px;
        height: 17px;
        margin: 0 12px 0 0;
        border: 1px solid #b5b5b5;
        border-radius: 50%;
        appearance: none;
        background: #fff;
    }
    input[type=radio]:checked {
        background: radial-gradient(circle, #990000 3px, #fff 4px);
    }
    .ip-panel {
        border: 1px solid #d2d2d4;
        height: 400px;
    }
    .ip-tabs {
        display: flex;
        gap: 5px;
        height: 46px;
        padding: 16px 0 0 17px;
        border-top: 1px solid #fff;
        background: linear-gradient(#e5e5e5 38px, #d4d4d4);
    }
    .ip-tabs button {
        width: 57px;
        height: 30px;
        padding: 0;
        border: 1px solid #d6d6d6;
        border-radius: 4px 4px 0 0;
        background: #f2f2f2;
    }
    .ip-tabs .on {
        border-color: #fff;
        background: #fff;
        font-weight: bold;
        color: #a00000;
    }
    .ip-rows {
        display: grid;
        gap: 5px;
        padding: 6px 0 0 29px;
    }
    .ip-rows .caption {
        width: 204px;
        line-height: 22px;
    }
    .ip-rows .radios {
        margin-bottom: 9px;
    }
    .ip-rows .nested > label:first-child {
        width: 204px;
        padding-left: 16px;
    }
    .ip-rows .box-input {
        width: 327px;
        color: #000;
    }
    .area {
        margin-bottom: 3px;
    }
    .ip-rows textarea {
        height: 62px;
        padding: 2px 7px;
        resize: none;
    }
    .area p {
        margin: 2px 0 0 3px;
        line-height: 17px;
    }
    .multi {
        display: flex;
        align-items: center;
        gap: 4px;
        margin-top: 11px;
        font-weight: bold;
    }
    .multi input[type=checkbox] {
        margin: 0;
        background: #fff;
    }
    .scrollbar {
        display: flex;
        flex-direction: column;
        align-items: center;
        width: 21px;
        padding: 7px 0 8px;
        background: #f1f1f1;
    }
    .scrollbar i {
        width: 17px;
        height: 322px;
        margin: 7px 0 auto;
        background: #c1c1c1;
    }
    .dialog-foot {
        display: flex;
        justify-content: flex-end;
        gap: 12px;
        height: 58px;
        padding: 11px 21px 0;
    }
    .dialog-foot button {
        width: 88px;
        height: 31px;
        padding: 0;
        border: 1px solid #a6a8ac;
        border-radius: 2px;
        background: linear-gradient(#e8e8e8, #dcdcdc 4px);
        font-size: 17px;
    }
</style>
